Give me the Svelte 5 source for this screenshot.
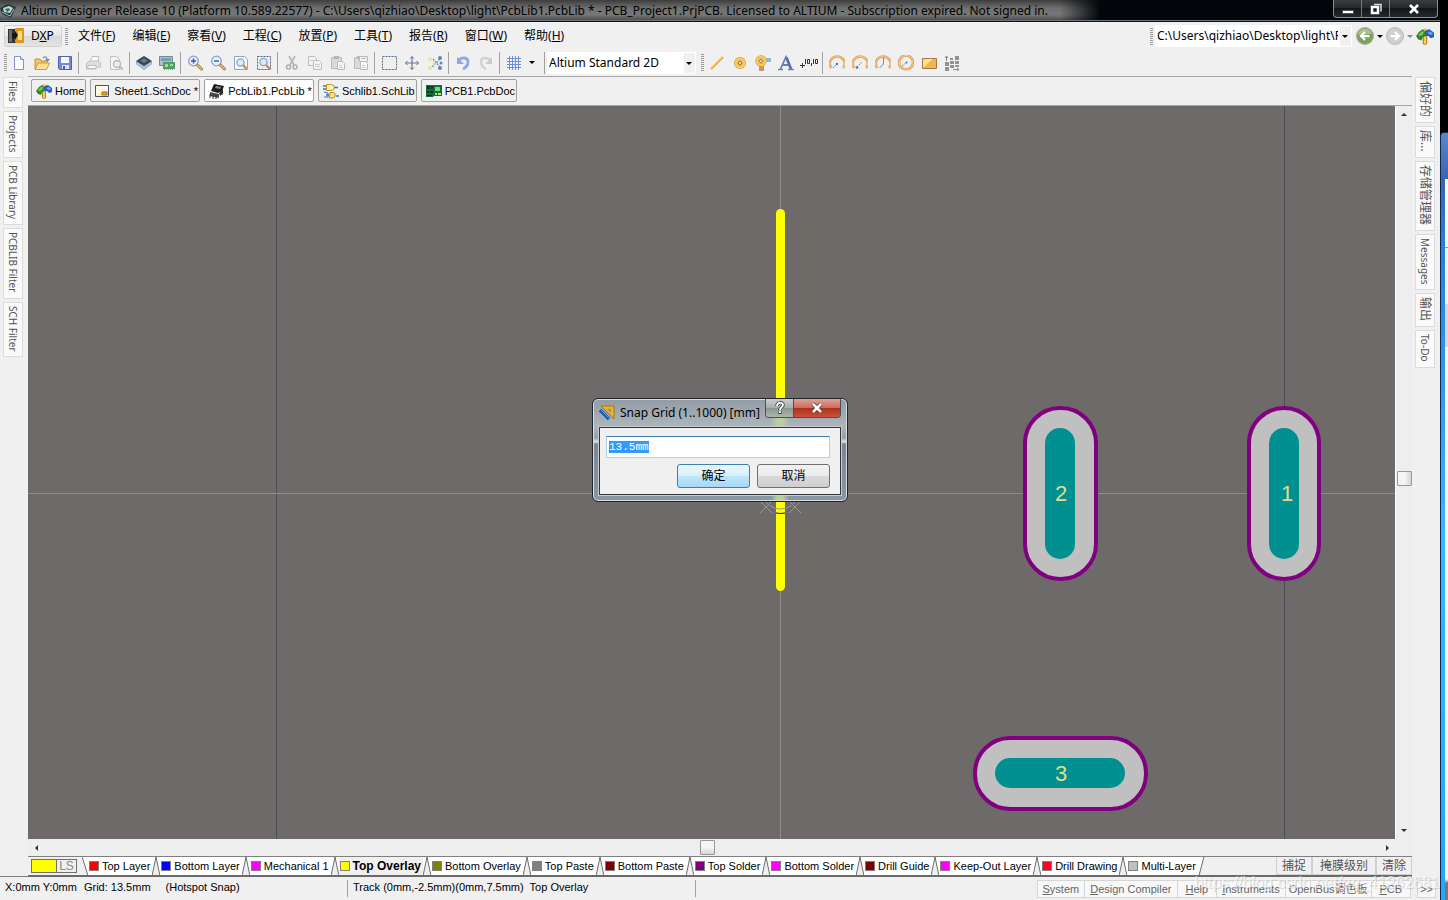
<script>
  const menus = [
    ['文件', 'F'], ['编辑', 'E'], ['察看', 'V'], ['工程', 'C'], ['放置', 'P'],
    ['工具', 'T'], ['报告', 'R'], ['窗口', 'W'], ['帮助', 'H']
  ];

  const tree = '<path d="M6 13V5h4v10l-2 1-2-1z" fill="#b9801a"/><path d="M7 5h2v10H7z" fill="#f0cf62"/><path d="M0 8l3-4 3-2 3 1v5l-3 1-1 3-3-1z" fill="#2f8a26"/><path d="M2 7l3-3 2 0-1 3-3 1z" fill="#7cc95a"/><path d="M8 3l4-1 4 3v4l-3 1-2-2-3 0z" fill="#2762b8"/><path d="M10 5l3-1 2 2-2 1z" fill="#6eaaf0"/><path d="M6 2l2-1 2 1-2 2z" fill="#e9c04a"/>';
  const doc = '<path d="M3.500 1.500h6l3 3v10h-9z" fill="#fbfcff" stroke="#8396b8"/><path d="M9.500 1.500v3h3" fill="#dbe4f3" stroke="#8396b8"/>';
  const pages = '<path d="M1.500 1.500h6l2 2v7h-8z" fill="#f3f3f3" stroke="#bdbdbd"/><path d="M6.500 5.500h6l2 2v7h-8z" fill="#f3f3f3" stroke="#bdbdbd"/><path d="M8 9.500h5M8 11.500h5M3 5.500h3" stroke="#cacaca"/>';
  const board = '<path d="M1.500 2.500h10v11h-10z" fill="#dadada" stroke="#bbb"/><path d="M4 1h5v3H4z" fill="#b5b5b5"/><path d="M7.500 6.500h5l2 2v6h-7z" fill="#f6f6f6" stroke="#bbb"/><path d="M9 10.500h3M9 12.500h4" stroke="#ccc"/>';
  const glass = '<circle cx="6.500" cy="6" r="4.800" fill="#e4effb" stroke="#8ba0c2" stroke-width="1.300"/><path d="M10.500 10l4 4" stroke="#a8753f" stroke-width="3" stroke-linecap="round"/><path d="M10.500 10l4 4" stroke="#e8c088" stroke-width="1.300" stroke-linecap="round"/>';
  const arc = '<path d="M2.500 14A7.500 7 0 1 1 14 14" fill="none" stroke="#dca664" stroke-width="2.600" transform="translate(0 -1)"/><path d="M2.500 14A7.500 7 0 1 1 14 14" fill="none" stroke="#f6c987" transform="translate(0 -1)"/>';

  const icons = {
    tree,
    doc,
    open: '<path d="M1 14V4h5l1 2h6v2" fill="#f3c55c" stroke="#c98f35"/><path d="M1 14.500L4 8h11.500l-3 6.500z" fill="#ffdf8d" stroke="#d09a3c"/><path d="M9 3c2-2 4-1 4 1" fill="none" stroke="#6d8dbb" stroke-width="1.300"/><path d="M11 4h5l-2.500 3z" fill="#6d8dbb"/>',
    save: '<path d="M1.500 1.500h13v13h-12l-1-1z" fill="#7786d6" stroke="#5361b4"/><path d="M4 2h8v6H4z" fill="#f5f7ff"/><path d="M5 10h7v4H5z" fill="#dfe3f5"/><path d="M6 11h2v3H6z" fill="#4e5aa8"/>',
    print: '<path d="M5.500 6L7 1.500h7L13 7" fill="#fafafa" stroke="#c0c0c0"/><path d="M1.500 8.500l3-2.500h9l2 2v4h-3l-2 2h-9z" fill="#dedede" stroke="#bdbdbd"/><path d="M3 10.500h8v3H3z" fill="#fafafa" stroke="#bdbdbd"/>',
    preview: '<path d="M2.500 1.500h6l3 3v10h-9z" fill="#f5f5f5" stroke="#c0c0c0"/><circle cx="9" cy="9" r="3.500" fill="#eee" stroke="#b8b8b8" stroke-width="1.400"/><path d="M11.500 11.500l3 3" stroke="#b8b8b8" stroke-width="2"/>',
    layers: '<path d="M0 6l8 5 8-5v3l-8 6-8-6z" fill="#86a9cc"/><path d="M0 6l8-5 8 5-8 5z" fill="#38424f"/><path d="M4 6l4-3 4 3-4 2z" fill="#66788b"/><path d="M1 8l7 5 7-5" stroke="#cddbe9" fill="none"/>',
    boardview: '<path d="M.5 1.500h13v9H.5z" fill="#aec1cd" stroke="#71899a"/><path d="M2 3h10v3H2z" fill="#7a9eb6"/><path d="M4 7h12v7H4z" fill="#4f9f62"/><path d="M6 9h3v3H6zM11 9h3v2h-3z" fill="#a8d49a"/><path d="M5 14.500h10" stroke="#b9a048" stroke-dasharray="1 1"/>',
    zoomin: glass + '<path d="M4 6h5M6.500 3.500v5" stroke="#3c5c9c" stroke-width="1.400"/>',
    zoomout: glass + '<path d="M4 6h5" stroke="#3c5c9c" stroke-width="1.400"/>',
    zoomdoc: '<path d="M1.500 1.500h10l3 3v10h-13z" fill="#f7f9fd" stroke="#93a3c1"/><circle cx="7.500" cy="7.500" r="3.600" fill="#dceafa" stroke="#8ba0c2" stroke-width="1.300"/><path d="M10 10l3.500 4" stroke="#c9904c" stroke-width="2.400"/>',
    zoomsel: '<path d="M1.500 1.500h13v13h-13z" fill="none" stroke="#4d618c" stroke-dasharray="2 1"/><circle cx="7.500" cy="7" r="3.600" fill="#dceafa" stroke="#8ba0c2" stroke-width="1.300"/><path d="M10 10l4 4" stroke="#c9904c" stroke-width="2.400"/>',
    cut: '<path d="M5 1l5 9M11 1L6 10" stroke="#b5b5b5" stroke-width="1.600"/><circle cx="4.500" cy="12" r="2" fill="none" stroke="#aaa" stroke-width="1.400"/><circle cx="11" cy="12" r="2" fill="none" stroke="#aaa" stroke-width="1.400"/>',
    copy: pages,
    paste: board,
    stamp: board + '<path d="M6.500 1.500h8v5h-8z" fill="#f4f4f4" stroke="#b9b9b9"/><path d="M8 3.500h5" stroke="#bbb"/>',
    select: '<path d="M1.500 1.500h14v13h-14z" fill="none" stroke="#5c6a85" stroke-dasharray="2 1"/>',
    move: '<path d="M8 1.500v13M1.500 8h13" stroke="#687792" stroke-width="1.200"/><path d="M6 3.500l2-2 2 2M6 12.500l2 2 2-2M3.500 6l-2 2 2 2M12.500 6l2 2-2 2" fill="none" stroke="#687792"/>',
    deselect: '<path d="M6 4l7 8M13 4L5 12" stroke="#7e8daa" stroke-width="1.300" stroke-dasharray="2 1"/><g fill="#ece2a8"><circle cx="3" cy="4" r="2"/><circle cx="7" cy="8" r="1.500"/><circle cx="3" cy="13" r="2"/></g><g fill="#6a82b4"><circle cx="13" cy="3" r="2"/><circle cx="14" cy="8" r="1.500"/><circle cx="13" cy="13" r="2"/></g>',
    undo: '<path d="M4 5c3-3 9-3 9 2 0 4-3 6-5 7" fill="none" stroke="#8aa9ea" stroke-width="2.800"/><path d="M2 2v7h7z" fill="#8aa9ea"/>',
    redo: '<path d="M12 5c-3-3-9-3-9 2 0 4 3 6 5 7" fill="none" stroke="#d2d2d2" stroke-width="2.600"/><path d="M14 2v7H7z" fill="#cbcbcb"/>',
    grid: '<path d="M1 3.500h14M1 6.500h14M1 9.500h14M1 12.500h14M3.500 1v14M6.500 1v14M9.500 1v14M12.500 1v14" stroke="#6a90dd"/>',
    line: '<path d="M2 14L14 2" stroke="#e0a045" stroke-width="2.200"/><path d="M2 13.500L13.500 2" stroke="#ffd66c"/>',
    pad: '<circle cx="8" cy="8" r="4" fill="#fff" stroke="#d9a04a" stroke-width="4"/><circle cx="8" cy="8" r="4" fill="none" stroke="#f8cf5c" stroke-width="2.600"/><circle cx="8" cy="8" r="1.600" fill="#e9e9e9" stroke="#a77a2e"/>',
    via: '<path d="M9 3h7v4H9z" fill="#7cc4dc"/><path d="M4 9h5v7H4z" fill="#c99468"/><circle cx="6" cy="6" r="4" fill="#fff" stroke="#d9a04a" stroke-width="3.600"/><circle cx="6" cy="6" r="4" fill="none" stroke="#f8cf5c" stroke-width="2.200"/><circle cx="6" cy="6" r="1.500" fill="#eee" stroke="#a77a2e"/>',
    letter: '<path d="M2.500 14L8 2l5 12M4.500 10h6" fill="none" stroke="#6b80b0" stroke-width="1.800"/><path d="M8.500 2.500L13 14" stroke="#566ea4" stroke-width="2.600"/><path d="M0 14.500h5M10 14.500h6" stroke="#6b80b0" stroke-width="1.400"/>',
    arcc: arc + '<path d="M4 13l4-4" stroke="#5f8ede" stroke-dasharray="2 1"/><circle cx="8" cy="9" r="1.200" fill="#3f74d2"/>',
    arce: arc + '<path d="M5 12l5-5" stroke="#5f8ede" stroke-dasharray="2 1"/><circle cx="5" cy="12.500" r="1.300" fill="#3f74d2"/>',
    arca: arc + '<path d="M8.500 2v7l-4 4" fill="none" stroke="#5f8ede"/>',
    circle: '<circle cx="8" cy="7.500" r="7" fill="none" stroke="#dca25a" stroke-width="2.600"/><circle cx="8" cy="7.500" r="7" fill="none" stroke="#fbcf84"/><path d="M4 11l5-4" stroke="#5f8ede" stroke-dasharray="2 1"/><circle cx="8.500" cy="7.500" r="1" fill="#3f74d2"/>',
    fill: '<path d="M1.500 3.500h14v10h-14z" fill="#eab750" stroke="#a5764c"/><path d="M2 13V4h10z" fill="#ffdd7b"/><path d="M2 8l8-4" stroke="#ffeaa8"/>',
    array: '<path d="M2.500 1v5M1 3l1.500-2L4 3M9 14.500h6M13 13l2 1.500-2 1.500" fill="none" stroke="#8e8e8e"/><g fill="#939393"><path d="M1 7h4v4H1zM1 12h4v4H1zM6 6h4v3H6zM6 10h4v3H6zM11 1h4v4h-4zM11 6h4v3h-4zM11 10h4v2h-4zM6 3h3v2H6z"/></g>',
    back: '<circle cx="8" cy="8" r="7.500" fill="#7ca35c" stroke="#a9a9a9"/><path d="M2 7a6 5 0 0 1 12-1z" fill="#a5c48b"/><path d="M12 8H5M8 4.500L4.500 8 8 11.500" fill="none" stroke="#fff" stroke-width="2"/>',
    forward: '<circle cx="8" cy="8" r="7.500" fill="#d0d0d0" stroke="#bdbdbd"/><path d="M4 8h7M8 4.500l3.500 3.500L8 11.500" fill="none" stroke="#fff" stroke-width="2"/>',
    sheet: '<path d="M.5 2.500h13v11H.5z" fill="#fff1a8" stroke="#44517c"/><path d="M1 3h12v4L1 12z" fill="#fffbe3"/><path d="M7 9h5v3H7z" fill="#e2a92e" stroke="#a77213"/>',
    chip: '<path d="M5 1l10 2-2 5-4 2-7-2z" fill="#1d1d1d"/><path d="M7 3l5 1-1 2-5-1z" fill="#8a8a8a"/><path d="M1 9l9 2v4l-9-2z" fill="#4c4c4c"/><path d="M10 10l4-4v4l-3 3" fill="#333"/><path d="M1 11v4M4 12v4M7 12v4M13 7v5" stroke="#222"/>',
    schlib: '<path d="M3.500 1.500h4a4 3 0 0 1 0 6h-4z" fill="#fff4b6" stroke="#c48b1f"/><path d="M0 3h3M0 6h3M11 4.500h4M3 12h3M13 13h3" stroke="#3778c2" stroke-width="1.400"/><path d="M7 9.500h3a4 3 0 0 1 0 5.500H6l1-3z" fill="#ffe27b" stroke="#c48b1f"/><path d="M1 9l4 1v4H1" fill="none" stroke="#3778c2"/>',
    pcb: '<path d="M0 2h16v11H8l-1 1H0z" fill="#0c7037"/><path d="M1 3h3v3H1zM5 3h2v3H5zM1 8h2v2H1zM4 8h3v2H4zM1 12h5v1H1z" fill="#122f22"/><path d="M9 4h5v4H9z" fill="#72d486"/><path d="M9 10h2v2H9zM12 10h3v2h-3z" fill="#b5e36d"/>'
  };

  const mainTools = [
    ['doc', 'open', 'save'], ['print', 'preview'], ['layers', 'boardview'],
    ['zoomin', 'zoomout', 'zoomdoc', 'zoomsel'], ['cut', 'copy', 'paste', 'stamp'],
    ['select', 'move', 'deselect'], ['undo', 'redo']
  ];
  const drawTools = ['arcc', 'arce', 'arca', 'circle', 'fill', 'array'];

  const docTabs = [
    { icon: 'tree', label: 'Home' },
    { icon: 'sheet', label: 'Sheet1.SchDoc *' },
    { icon: 'chip', label: 'PcbLib1.PcbLib *', active: true },
    { icon: 'schlib', label: 'Schlib1.SchLib' },
    { icon: 'pcb', label: 'PCB1.PcbDoc' }
  ];

  const leftDock = ['Files', 'Projects', 'PCB Library', 'PCBLIB Filter', 'SCH Filter'];
  const rightDock = ['偏好的', '库...', '存储管理器', 'Messages', '输出', 'To-Do'];
  const isHan = (s) => /[\u4e00-\u9fff]/.test(s);

  const layers = [
    ['Top Layer', '#ff0000'], ['Bottom Layer', '#0000ff'], ['Mechanical 1', '#ff00ff'],
    ['Top Overlay', '#ffff00'], ['Bottom Overlay', '#808000'], ['Top Paste', '#808080'],
    ['Bottom Paste', '#800000'], ['Top Solder', '#800080'], ['Bottom Solder', '#ff00ff'],
    ['Drill Guide', '#800000'], ['Keep-Out Layer', '#ff00ff'], ['Drill Drawing', '#ff002b'],
    ['Multi-Layer', '#c0c0c0']
  ];
  let activeLayer = $state('Top Overlay');

  const panels = [
    ['S', 'ystem'], ['D', 'esign Compiler'], ['H', 'elp'], ['I', 'nstruments'],
    ['', 'OpenBus调色板'], ['P', 'CB']
  ];

  let grid = $state('13.5mm');
  let gridInput;
  $effect(() => {
    gridInput.focus();
    gridInput.select();
  });
</script>

{#snippet icon(name)}
  <svg class="icon" viewBox="0 0 16 16" aria-hidden="true">{@html icons[name]}</svg>
{/snippet}

{#snippet tool(name)}
  <button class="tool" aria-label={name}>{@render icon(name)}</button>
{/snippet}

<div class="screen">
  <div class="window">
    <header class="titlebar">
      <svg class="icon" viewBox="0 0 16 16" aria-hidden="true">
        <path d="M0 5l8-4 8 3-5 11-9-4z" fill="#1f3b46" /><path d="M3 5l6-2 4 2-3 5-6-1z" fill="#d9d5a4" />
        <path d="M5 6l4-1 1 2-3 2z" fill="#2e7083" /><path d="M2 9l8 4 4-7" fill="none" stroke="#9cc6ce" />
      </svg>
      <h1>Altium Designer Release 10 (Platform 10.589.22577) - C:\Users\qizhiao\Desktop\light\PcbLib1.PcbLib * - PCB_Project1.PrjPCB. Licensed to ALTIUM - Subscription expired. Not signed in.</h1>
      <div class="winbuttons">
        <button aria-label="Minimize"><svg viewBox="0 0 14 14"><path d="M1.500 8.500h11v3h-11z" fill="#fff" stroke="#555" /></svg></button>
        <button aria-label="Restore"><svg viewBox="0 0 14 14"><path d="M5 2.500h7v7" fill="none" stroke="#ddd" stroke-width="1.500" /><path d="M3 5h6v6H3z" fill="none" stroke="#fff" stroke-width="2.500" /></svg></button>
        <button class="wide" aria-label="Close"><svg viewBox="0 0 14 14"><path d="M3 3l8 8M11 3l-8 8" stroke="#fff" stroke-width="2.600" /></svg></button>
      </div>
    </header>

    <div class="menubar">
      <button class="dxp">
        <svg class="icon" viewBox="0 0 16 16" aria-hidden="true">
          <path d="M0 1h8v14H0z" fill="#333" /><path d="M7 0h9v15H8l-1-1z" fill="#d99a1d" /><path d="M10 3h4v9h-4z" fill="#f9dc82" />
          <path d="M4 5h3V3l3 4-3 5v-2H4z" fill="#161616" /><path d="M1 2h3v12H1z" fill="#6c6c6c" />
        </svg>
        <span>D<u>X</u>P</span>
      </button>
      <i class="grip"></i>
      <nav>
        {#each menus as [label, key]}
          <button>{label}(<u>{key}</u>)</button>
        {/each}
      </nav>
      <div class="path">
        <i class="grip"></i>
        <div class="combo pathcombo">
          <select aria-label="Document path"><option>C:\Users\qizhiao\Desktop\light\PcbLib1.PcbLib</option></select>
        </div>
        <button class="nav" aria-label="Back">{@render icon('back')}</button>
        <i class="caret"></i>
        <button class="nav" aria-label="Forward">{@render icon('forward')}</button>
        <i class="caret dim"></i>
        <button class="nav" aria-label="Home page">{@render icon('tree')}</button>
      </div>
    </div>

    <div class="toolbar">
      <i class="grip"></i>
      {#each mainTools as group}
        {#each group as name}{@render tool(name)}{/each}
        <i class="sep"></i>
      {/each}
      {@render tool('grid')}
      <i class="caret gridcaret"></i>
      <i class="sep"></i>
      <div class="combo viewcombo">
        <select aria-label="View configuration"><option>Altium Standard 2D</option></select>
      </div>
      <i class="grip second"></i>
      {#each ['line', 'pad', 'via', 'letter'] as name}{@render tool(name)}{/each}
      <button class="tool coord" aria-label="Coordinate">
        <svg viewBox="0 0 20 16" aria-hidden="true">
          <path d="M1 10.500h5M3.500 8v5" stroke="#333" /><path d="M6.500 4v5M8.500 4.500h2v4h-2zM12.500 8v3M14.500 4v5M16.500 4.500h2v4h-2z" fill="none" stroke="#333" />
        </svg>
      </button>
      <i class="sep"></i>
      {#each drawTools as name}{@render tool(name)}{/each}
    </div>

    <div class="body">
      <aside class="dock">
        {#each leftDock as label}<button>{label}</button>{/each}
      </aside>

      <main>
        <div class="doctabs">
          {#each docTabs as tab}
            <button class:active={tab.active}>{@render icon(tab.icon)}{tab.label}</button>
          {/each}
        </div>

        <div class="view">
          <div class="canvas">
            <svg class="board" viewBox="0 0 1367 733" preserveAspectRatio="xMidYMid slice" role="img" aria-label="Footprint">
              <g shape-rendering="crispEdges">
                <path d="M248.500 0v733M1256.500 0v733" stroke="#4c4b58" />
                <path d="M752.500 0v733M0 387.500h1367" stroke="#8f8c8b" />
              </g>
              <path d="M752.500 107.500v373" stroke="#ffff00" stroke-width="9" stroke-linecap="round" />
              <path d="M735 390a18 17 0 0 0 35 0M732 407l12-12m-12 0l12 12m17-12l12 12m-12 0l12-12" fill="none" stroke="#999" />
              <path d="M748 407q5 1 9 0" fill="none" stroke="#0000c0" />
              <g fill="#c0c0c0" stroke="#800080" stroke-width="4">
                <rect x="997" y="302" width="71" height="171" rx="35" />
                <rect x="1221" y="302" width="70" height="171" rx="35" />
                <rect x="947" y="632" width="171" height="71" rx="35" />
              </g>
              <g fill="#009090">
                <rect x="1017" y="322" width="30" height="131" rx="15" />
                <rect x="1241" y="322" width="30" height="131" rx="15" />
                <rect x="967" y="652" width="130" height="30" rx="15" />
              </g>
              <g class="designator">
                <text x="1033" y="395">2</text>
                <text x="1259" y="395">1</text>
                <text x="1033" y="675">3</text>
              </g>
            </svg>

            <form class="dialog" onsubmit={(e) => e.preventDefault()}>
              <div class="dialogtitle">
                <svg class="icon" viewBox="0 0 16 16" aria-hidden="true">
                  <path d="M2 1h13v13z" fill="#e9b526" stroke="#a67812" /><path d="M8 4h4v4z" fill="#8f938d" /><path d="M1 5l9 9" stroke="#1d5da8" stroke-width="3.500" /><path d="M2 5l8 8" stroke="#58a5e6" />
                </svg>
                <h2>Snap Grid (1..1000) [mm]</h2>
                <div class="dialogbuttons">
                  <button type="button" aria-label="Help"><svg viewBox="0 0 14 14"><path d="M4 5c0-4 6-4 6-1 0 2-3 2-3 5M7 10v3" fill="none" stroke="#444" stroke-width="3.500" /><path d="M4 5c0-4 6-4 6-1 0 2-3 2-3 5M7 10v2" fill="none" stroke="#fff" stroke-width="1.800" /></svg></button>
                  <button type="button" class="close" aria-label="Close"><svg viewBox="0 0 14 14"><path d="M3 3l8 8M11 3l-8 8" stroke="#5c3535" stroke-width="4" /><path d="M3 3l8 8M11 3l-8 8" stroke="#fff" stroke-width="2.500" /></svg></button>
                </div>
              </div>
              <div class="dialogbody">
                <input aria-label="Snap Grid" bind:this={gridInput} bind:value={grid} />
                <div class="actions">
                  <button class="ok">确定</button>
                  <button type="button">取消</button>
                </div>
              </div>
            </form>
          </div>
          <div class="vscroll">
            <button aria-label="Scroll up"><i class="arrow up"></i></button>
            <i class="thumb"></i>
            <button aria-label="Scroll down"><i class="arrow down"></i></button>
          </div>
          <div class="hscroll">
            <button aria-label="Scroll left"><i class="arrow left"></i></button>
            <i class="thumb"></i>
            <button aria-label="Scroll right"><i class="arrow right"></i></button>
          </div>
        </div>

        <div class="layerbar">
          <button class="layerset"><i></i><span>LS</span></button>
          <div class="layertabs">
            <svg class="first" viewBox="0 0 6 19" aria-hidden="true"><path d="M0 19V0l6 19z" fill="#efefef" /><path d="M0 0l6 19" stroke="#666" /></svg>
            {#each layers as [name, color], i}
              <button class:active={name === activeLayer} onclick={() => (activeLayer = name)}>
                <i style="background: {color}"></i>{name}
              </button>
              {#if i < layers.length - 1}
                <svg viewBox="0 0 8 19" aria-hidden="true"><path d="M0 19L4 0l4 19" fill="#efefef" stroke="#666" /></svg>
              {:else}
                <svg viewBox="0 0 8 19" aria-hidden="true"><path d="M1 19L6 0h2v19" fill="#efefef" /><path d="M1 19L6 0" stroke="#666" /></svg>
              {/if}
            {/each}
          </div>
          <div class="layertools">
            <button>捕捉</button><button>掩膜级别</button><button>清除</button>
          </div>
        </div>
      </main>

      <aside class="dock right">
        {#each rightDock as label}<button class:han={isHan(label)}>{label}</button>{/each}
      </aside>
    </div>

    <footer>
      <div class="status first"><span>X:0mm Y:0mm</span><span>Grid: 13.5mm</span><span class="snap">(Hotspot Snap)</span></div>
      <div class="status"><span>Track (0mm,-2.5mm)(0mm,7.5mm)&nbsp; Top Overlay</span></div>
      <div class="panels">
        {#each panels as [key, rest]}<button><u>{key}</u>{rest}</button>{/each}
        <button class="more">&gt;&gt;</button>
      </div>
      <span class="credit">https://blog.csdn.net/qq_41262681</span>
    </footer>
  </div>
  <div class="behind"><div class="otherwin"><i></i></div></div>
</div>

<style>
  :global(body) { background: #000; }
  * { box-sizing: border-box; }
  .screen {
    display: flex;
    height: 100vh;
    overflow: hidden;
    font: 12px/16px "Noto Sans", "Noto Sans CJK SC", sans-serif;
    color: #000;
  }
  button { font: inherit; color: inherit; border: 0; background: none; padding: 0; margin: 0; white-space: nowrap; }
  h1, h2 { margin: 0; font-weight: 400; white-space: nowrap; }
  i { display: block; flex: none; }
  svg { display: block; flex: none; }
  .icon { width: 16px; height: 16px; }
  .window { flex: 1; min-width: 0; display: flex; flex-direction: column; background: #f0f0f0; position: relative; }

  .titlebar {
    flex: none;
    height: 22px;
    display: flex;
    align-items: center;
    gap: 5px;
    border-bottom: 1px solid #10131d;
    box-shadow: inset 0 -1px #6d747c;
    background:
      linear-gradient(90deg, #0000 0 1060px, #02060a 1100px),
      linear-gradient(#3d3d3d, #707070 40%, #777 70%, #484848);
  }
  h1 { flex: 1; font-size: 12px; overflow: hidden; }
  .winbuttons {
    align-self: flex-start;
    display: flex;
    height: 18px;
    margin-right: 2px;
    border: 1px solid #8b8d90;
    border-top: 0;
    border-radius: 0 0 4px 4px;
    background: linear-gradient(#3a3d40, #24272a 50%, #14171a 50%, #25282b);
  }
  .winbuttons button { width: 28px; display: grid; place-items: center; border-right: 1px solid #77797b; }
  .winbuttons button.wide { width: 47px; border: 0; }
  .winbuttons svg { width: 14px; height: 14px; }

  .menubar { flex: none; height: 28px; display: flex; align-items: center; padding: 0 6px 0 4px; }
  .dxp {
    width: 58px; height: 22px; display: flex; align-items: center; gap: 7px; padding-left: 3px;
    border: 1px solid #d2d2d2; border-radius: 2px;
    background: linear-gradient(#f4f4f4, #e6e6e6 50%, #d8d8d8 50%, #e4e4e4);
  }
  .grip { width: 3px; height: 17px; background: repeating-linear-gradient(#9c9c9c 0 1px, #f0f0f0 1px 2px); }
  .dxp + .grip { margin: 0 1px 0 3px; }
  nav { display: flex; flex: 1; }
  nav button { padding: 0 8px 0 9px; }
  .path { display: flex; align-items: center; }
  .path .icon { width: 18px; height: 18px; }
  .combo { position: relative; background: #fff; border: 1px solid #fff; height: 22px; }
  .combo::before { content: ""; position: absolute; right: 0; top: 0; bottom: 0; width: 11px; background: #f0f0f0; pointer-events: none; }
  .combo::after {
    content: ""; position: absolute; right: 3px; top: 9px; pointer-events: none;
    border: 3px solid transparent; border-top-color: #000; border-bottom: 0;
  }
  select { appearance: none; width: 100%; height: 100%; border: 0; padding: 0 13px 0 1px; background: none; font: inherit; color: inherit; outline: 0; }
  .pathcombo { width: 197px; margin: 0 4px 0 2px; }
  .viewcombo { width: 149px; }
  .caret { width: 0; height: 0; border: 3px solid transparent; border-top-color: #000; border-bottom: 0; margin: 0 3px; }
  .caret.dim { border-top-color: #888; }

  .toolbar { flex: none; height: 25px; display: flex; align-items: center; padding-left: 4px; }
  .tool { width: 23px; height: 23px; display: grid; place-items: center; }
  .coord svg { width: 20px; height: 16px; }
  .sep { width: 1px; height: 22px; margin: 0 2px; background: #a0a0a0; }
  .gridcaret { margin: 0 7px 0 4px; }
  .second { margin: 0 1px 0 5px; }

  .body { flex: 1; min-height: 0; display: flex; margin-top: 1px; }
  .dock { width: 28px; flex: none; display: flex; flex-direction: column; align-items: center; gap: 3px; padding: 1px 2px 0 0; border-bottom: 1px solid #808080; }
  .dock.right { border-bottom: 0; }
  .dock button {
    width: 20px; padding: 3px 0 5px; writing-mode: vertical-rl; text-orientation: sideways;
    font-size: 10px; line-height: 16px; color: #555; background: #fafafa; border: 1px solid #dcdcdc;
    display: flex; align-items: center;
  }
  .dock button.han { font-size: 12px; }

  main { flex: 1; min-width: 0; display: flex; flex-direction: column; border-top: 1px solid #a6a6a6; }
  .doctabs { flex: none; height: 29px; display: flex; align-items: flex-start; gap: 4px; padding: 2px 3px; border-bottom: 1px solid #a6a6a6; }
  .doctabs button {
    height: 23px; display: flex; align-items: center; gap: 3px; padding: 0 1px 0 4px;
    font: 11px/14px "Liberation Sans", sans-serif; border: 1px solid #a0a0a0; border-radius: 2px; background: #f0f0f0;
  }
  .doctabs button.active { background: #fff; }

  .view { flex: 1; min-height: 0; display: grid; grid-template: 1fr 17px / 1fr 17px; background: #eee; }
  .canvas { position: relative; background: #6e6a69; overflow: hidden; }
  .board { width: 100%; height: 100%; }
  .designator { font: 22px "Liberation Sans", sans-serif; fill: #e4dc8c; text-anchor: middle; }
  .vscroll, .hscroll { display: flex; align-items: center; justify-content: space-between; }
  .vscroll { flex-direction: column; border-left: 1px solid #fff; }
  .vscroll button, .hscroll button { width: 16px; height: 17px; display: grid; place-items: center; }
  .thumb { width: 15px; height: 15px; border: 1px solid #979797; border-radius: 1px; background: linear-gradient(90deg, #f5f5f5 50%, #d5d5d8); }
  .vscroll .thumb { margin-top: 12px; }
  .hscroll .thumb { margin-right: 8px; background: linear-gradient(#f5f5f5 50%, #d5d5d8); }
  .arrow { border: 3px solid transparent; width: 0; height: 0; }
  .up { border-bottom-color: #333; border-top: 0; }
  .down { border-top-color: #333; border-bottom: 0; }
  .left { border-right-color: #333; border-left: 0; }
  .right.arrow { border-left-color: #333; border-right: 0; }

  .dialog {
    position: absolute; left: 564px; top: 292px; width: 256px; padding: 0 6px 6px;
    border: 1px solid #20252b; border-radius: 6px; box-shadow: inset 0 0 0 1px #d7dee4;
    background:
      linear-gradient(90deg, #0000 178px, #b9cf9c 184px 190px, #0000 196px),
      linear-gradient(#929ca6, #adb6bd 28%, #939da6 38%, #dfe5e9 42%, #7c8792 44%, #8b97a3);
  }
  .dialogtitle { display: flex; align-items: center; height: 28px; gap: 5px; }
  h2 { flex: 1; min-width: 0; font-size: 12px; line-height: 18px; }
  .dialogbuttons { display: flex; align-self: flex-start; height: 19px; border: 1px solid #4a4f55; border-top: 0; border-radius: 0 0 4px 4px; overflow: hidden; }
  .dialogbuttons button { width: 28px; display: grid; place-items: center; background: linear-gradient(#c8cdd0, #a4adad 50%, #8b9690 50%, #abb9a8); border-right: 1px solid #4a4f55; }
  .dialogbuttons .close { width: 46px; border: 0; background: linear-gradient(#dba49a, #cd6b5c 48%, #ac2f1d 50%, #c9513c); }
  .dialogbuttons svg { width: 14px; height: 14px; }
  .dialogbody { height: 68px; padding: 8px 10px 6px 6px; border: 1px solid #32373d; background: #f0f0f0; box-shadow: 0 0 0 1px #c4ccd2; }
  input {
    display: block; width: 100%; height: 22px; padding: 0 2px; font: 11px/14px "Liberation Mono", monospace;
    border: 1px solid #b5cfe7; border-top-color: #3d7bad; border-radius: 1px; outline: 0; background: #fff; caret-color: transparent;
  }
  input::selection { background: #3399ff; color: #fff; }
  .actions { display: flex; justify-content: flex-end; gap: 7px; margin-top: 6px; }
  .actions button { width: 73px; height: 24px; border: 1px solid #707070; border-radius: 3px; background: linear-gradient(#f2f2f2, #ebebeb 50%, #dadada 50%, #cfcfcf); }
  .actions .ok { border-color: #3c7fb1; background: linear-gradient(#eaf6fd, #d9f0fc 50%, #bee6fd 50%, #a7d9f5); }

  .layerbar { flex: none; height: 21px; display: flex; border-top: 1px solid #808080; border-bottom: 2px solid #6a6a6a; font: 11px/14px "Liberation Sans", "Noto Sans CJK SC", sans-serif; }
  .layerset { width: 46px; height: 14px; margin: 2px 5px 0 3px; display: flex; border: 1px solid #707070; color: #888; font-size: 12px; line-height: 13px; }
  .layerset i { width: 25px; height: 12px; background: #ffff00; border-right: 1px solid #707070; }
  .layerset span { flex: 1; }
  .layertabs { display: flex; }
  .layertabs svg { width: 8px; height: 18px; background: #fff; }
  .layertabs .first { width: 6px; }
  .layertabs button { display: flex; align-items: center; gap: 3px; padding: 0 2px 0 1px; background: #fff; }
  .layertabs button i { width: 10px; height: 10px; border: 1px solid #808080; }
  .layertabs button.active { background: #f0f0f0; font-weight: 700; font-size: 12px; }
  .layertools { display: flex; margin-left: auto; font-size: 12px; color: #555; }
  .layertools button { padding: 0 5px; border: 1px solid #d0d0d0; border-top: 0; }
  .layertools button:nth-child(2) { padding: 0 7px; }

  footer { flex: none; height: 23px; display: flex; align-items: center; font: 11px/14px "Liberation Sans", "Noto Sans CJK SC", sans-serif; position: relative; }
  .status { width: 348px; height: 17px; display: flex; gap: 7px; padding-left: 5px; border-right: 1px solid #a0a0a0; }
  .snap { margin-left: 8px; }
  .panels { display: flex; margin-left: auto; color: #666; }
  .panels button { height: 18px; padding: 0 5px; border: 1px solid #d6d6d6; border-right: 0; background: #f8f8f8; }
  .panels button:nth-child(3) { padding: 0 8px; }
  .panels button:nth-child(5) { padding: 0 3px; }
  .panels button:nth-child(6) { padding: 0 8px; border-right: 1px solid #d6d6d6; }
  .panels .more { margin: 0 4px 0 6px; padding: 0 2px; border-right: 1px solid #d6d6d6; }
  .credit { position: absolute; right: 0; top: -4px; font: 16px/20px "Liberation Sans", sans-serif; color: #fff9; text-shadow: 1px 1px 1px #8885; pointer-events: none; white-space: nowrap; }

  .behind { width: 8px; flex: none; padding-top: 132px; background: #000; display: flex; }
  .otherwin { flex: 1; padding: 46px 0 0 4px; border-left: 1px solid #0b2a50; border-top: 1px solid #0b2a50; border-radius: 4px 0 0 0; background: linear-gradient(#5888cc, #3a66b0 46px, #2a80dc 120px, #38b6ff 400px, #28a4f8); display: flex; }
  .otherwin i { flex: 1; background: linear-gradient(#fff 68px, #999 68px 69px, #f3f3f3 69px 125px, #d8d8de 125px 168px, #f6f6f6 168px 700px, #777 704px); }
</style>
